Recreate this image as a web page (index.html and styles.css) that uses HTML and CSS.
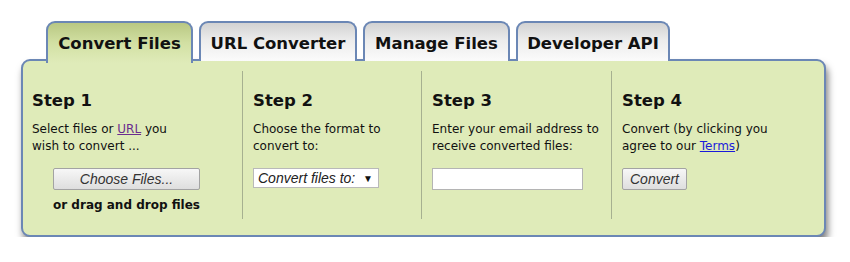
FILE: index.html
```html
<!DOCTYPE html>
<html lang="en">
<head>
<meta charset="utf-8">
<title>Convert Files</title>
<link rel="stylesheet" href="styles.css">
</head>
<body>
<div class="wrap">
  <div class="tabs">
    <div class="tab tab-active tab-w1">Convert Files</div>
    <div class="tab tab-w2">URL Converter</div>
    <div class="tab tab-w3">Manage Files</div>
    <div class="tab tab-w4">Developer API</div>
  </div>
  <div class="panel">
    <div class="col col-1">
      <h2 class="step">Step 1</h2>
      <p class="desc">Select files or <a class="link-visited" href="#">URL</a> you<br>wish to convert ...</p>
      <div class="choose-wrap">
        <button class="btn btn-choose" type="button">Choose Files...</button>
        <div class="drop-note">or drag and drop files</div>
      </div>
    </div>
    <div class="col col-2">
      <h2 class="step">Step 2</h2>
      <p class="desc">Choose the format to<br>convert to:</p>
      <div class="select"><span>Convert files to:</span><span class="arrow">&#9660;</span></div>
    </div>
    <div class="col col-3">
      <h2 class="step">Step 3</h2>
      <p class="desc">Enter your email address to<br>receive converted files:</p>
      <input class="email" type="text" aria-label="Email">
    </div>
    <div class="col col-4">
      <h2 class="step">Step 4</h2>
      <p class="desc">Convert (by clicking you<br>agree to our <a class="link" href="#">Terms</a>)</p>
      <button class="btn btn-convert" type="button">Convert</button>
    </div>
  </div>
</div>
</body>
</html>
```

FILE: styles.css
```css
html, body {
  margin: 0;
  padding: 0;
  background: #ffffff;
}

body {
  font-family: "DejaVu Sans", Verdana, sans-serif;
  color: #111;
}

.wrap {
  padding: 21px 0 0 21px;
  width: 808px;
}

.tabs {
  display: flex;
  gap: 6px;
  margin-left: 25px;
  position: relative;
  z-index: 2;
  height: 40px;
  margin-bottom: -2px;
}

.tab {
  box-sizing: border-box;
  height: 40px;
  border: 2px solid #6b87b5;
  border-bottom: none;
  border-radius: 9px 9px 0 0;
  background: linear-gradient(#d2d2d2, #ececec 45%, #fbfbfb);
  font-weight: bold;
  font-size: 16.5px;
  line-height: 20px;
  padding-top: 11px;
  text-align: center;
  color: #111;
}

.tab-active {
  background: linear-gradient(#b9c883, #d2e0a3 50%, #dfebb9);
  height: 42px;
}

.tab-w1 { width: 147px; }
.tab-w2 { width: 158px; }
.tab-w3 { width: 147px; }
.tab-w4 { width: 154px; }

.panel {
  box-sizing: border-box;
  width: 805px;
  height: 178px;
  border: 2px solid #6b87b5;
  border-radius: 9px;
  background: #dfebb9;
  box-shadow: 2px 6px 7px rgba(0, 0, 0, 0.5);
  display: grid;
  grid-template-columns: 219px 179px 190px 1fr;
  padding: 10px 0 16px 0;
}

.col {
  padding: 0 10px;
  height: 148px;
  box-sizing: border-box;
}

.col-1 {
  padding-left: 9px;
}

.col-2, .col-3, .col-4 {
  border-left: 1px solid #a6b090;
}

.step {
  margin: 20px 0 0 0;
  font-size: 16.5px;
  line-height: 20px;
  font-weight: bold;
}

.desc {
  margin: 10px 0 0 0;
  font-size: 12px;
  line-height: 17px;
}

.link-visited {
  color: #6b2c8f;
}

.link {
  color: #1a1adb;
}

.choose-wrap {
  margin-top: 13px;
  display: flex;
  flex-direction: column;
  align-items: center;
  width: 189px;
}

.btn {
  font-family: "Liberation Sans", Arial, sans-serif;
  font-style: italic;
  font-size: 14px;
  color: #333;
  border: 1px solid #a3a3a3;
  border-radius: 2px;
  background: linear-gradient(#f7f7f7, #dedede);
  box-sizing: border-box;
  height: 22px;
  padding: 0;
  margin: 0;
}

.btn-choose {
  width: 147px;
}

.drop-note {
  margin-top: 7px;
  font-weight: bold;
  font-size: 12px;
  line-height: 16px;
}

.select {
  margin-top: 13px;
  box-sizing: border-box;
  width: 126px;
  height: 20px;
  background: #fff;
  border: 1px solid #b9b9b9;
  display: flex;
  align-items: center;
  justify-content: space-between;
  padding: 0 5px 0 4px;
  font-family: "Liberation Sans", Arial, sans-serif;
  font-style: italic;
  font-size: 14px;
  color: #222;
}

.arrow {
  font-style: normal;
  font-size: 10px;
  color: #111;
}

.email {
  display: block;
  margin: 13px 0 0 0;
  box-sizing: border-box;
  width: 151px;
  height: 22px;
  border: 1px solid #b4b4b4;
  background: #fff;
  padding: 0;
}

.btn-convert {
  display: block;
  margin-top: 13px;
  width: 65px;
}
```
